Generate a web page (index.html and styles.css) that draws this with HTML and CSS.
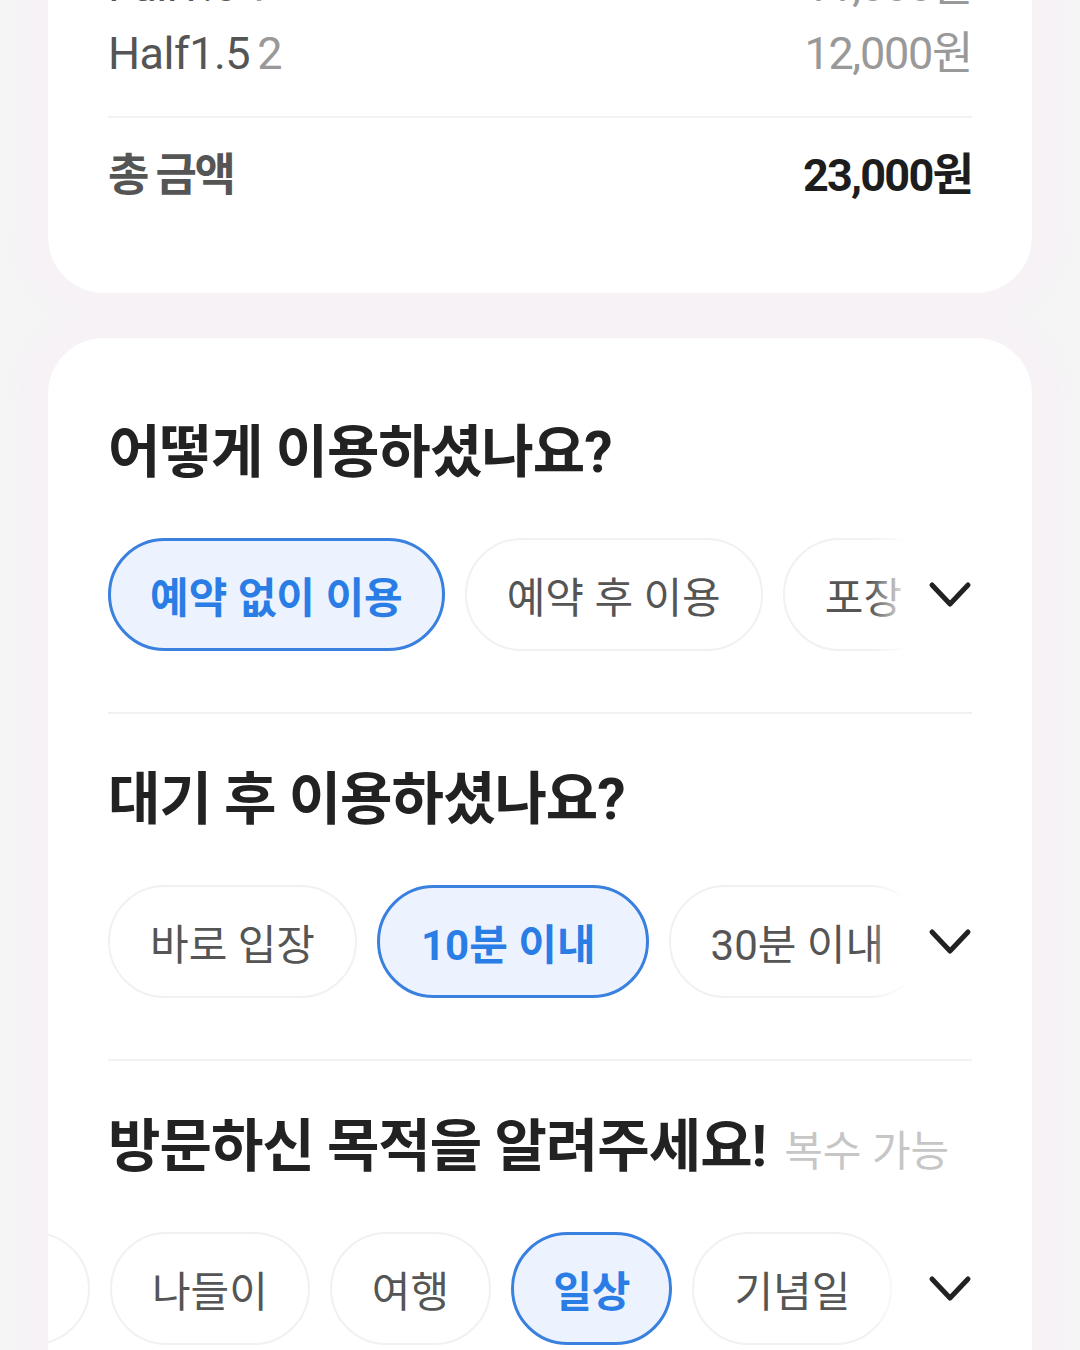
FILE: index.html
```html
<!DOCTYPE html>
<html lang="ko">
<head>
<meta charset="UTF-8">
<meta name="viewport" content="width=device-width, initial-scale=1.0">
<title>리뷰 작성</title>
<link rel="stylesheet" href="styles.css">
</head>
<body>
<div class="page">
    <div class="card receipt">
        <div class="item-row">
            <span class="item-name">Full1.0<span class="qty">1</span></span>
            <span class="item-price">11,000원</span>
        </div>
        <div class="item-row">
            <span class="item-name">Half1.5<span class="qty">2</span></span>
            <span class="item-price">12,000원</span>
        </div>
        <div class="total-row">
            <span class="total-label">총 금액</span>
            <span class="total-price">23,000원</span>
        </div>
    </div>

    <div class="card survey">
        <div class="section">
            <h2 class="question">어떻게 이용하셨나요?</h2>
            <div class="chips">
                <div class="chip-track">
                    <button class="chip selected">예약 없이 이용</button>
                    <button class="chip">예약 후 이용</button>
                    <button class="chip">포장</button>
                    <button class="chip">배달</button>
                </div>
                <div class="more">
                    <svg width="44" height="28" viewBox="0 0 44 28"><polyline points="4,4 22,23 40,4" fill="none" stroke="#222" stroke-width="5" stroke-linecap="round" stroke-linejoin="round"/></svg>
                </div>
            </div>
        </div>

        <div class="section">
            <h2 class="question">대기 후 이용하셨나요?</h2>
            <div class="chips">
                <div class="chip-track">
                    <button class="chip">바로 입장</button>
                    <button class="chip selected wide">10분 이내</button>
                    <button class="chip">30분 이내</button>
                    <button class="chip">1시간 이내</button>
                </div>
                <div class="more">
                    <svg width="44" height="28" viewBox="0 0 44 28"><polyline points="4,4 22,23 40,4" fill="none" stroke="#222" stroke-width="5" stroke-linecap="round" stroke-linejoin="round"/></svg>
                </div>
            </div>
        </div>

        <div class="section">
            <h2 class="question">방문하신 목적을 알려주세요! <span class="hint">복수 가능</span></h2>
            <div class="chips">
                <div class="chip-track scrolled">
                    <button class="chip">데이트</button>
                    <button class="chip">나들이</button>
                    <button class="chip">여행</button>
                    <button class="chip selected">일상</button>
                    <button class="chip">기념일</button>
                </div>
                <div class="more">
                    <svg width="44" height="28" viewBox="0 0 44 28"><polyline points="4,4 22,23 40,4" fill="none" stroke="#222" stroke-width="5" stroke-linecap="round" stroke-linejoin="round"/></svg>
                </div>
            </div>
        </div>
    </div>
</div>
</body>
</html>
```

FILE: styles.css
```css
body {
    margin: 0;
    padding: 0;
    background-color: #f5f5f5;
    font-family: Roboto, "Noto Sans CJK KR", sans-serif;
    color: #222;
}
.page {
    padding: 0 48px;
    height: 1350px;
    overflow: hidden;
}
.card {
    background-color: #fff;
    border-radius: 56px;
    padding: 0 60px;
    box-shadow: 0 0 16px 32px #f6f2f6;
    overflow: hidden;
}
.receipt {
    margin-top: -88px;
    padding-top: 40px;
    padding-bottom: 84px;
}
.item-row {
    display: flex;
    justify-content: space-between;
    height: 68px;
    line-height: 68px;
    font-size: 45px;
    letter-spacing: -0.5px;
}
.item-name {
    color: #555;
}
.qty {
    color: #999;
    margin-left: 7px;
}
.item-price {
    color: #999;
    letter-spacing: -1.3px;
}
.total-row {
    display: flex;
    justify-content: space-between;
    margin-top: 28px;
    padding-top: 25px;
    border-top: 2px solid #f2f2f2;
    height: 66px;
    line-height: 66px;
    font-size: 45px;
    font-weight: 700;
}
.total-label {
    color: #555;
    letter-spacing: -2.5px;
}
.total-price {
    color: #1d1d1d;
    letter-spacing: -1.8px;
}
.survey {
    margin-top: 45px;
    padding-top: 79px;
    height: 1100px;
}
.section {
    padding-bottom: 61px;
    border-bottom: 2px solid #f2f2f2;
}
.section + .section {
    padding-top: 50px;
}
.question {
    margin: 0;
    height: 72px;
    line-height: 72px;
    font-size: 57px;
    font-weight: 700;
    letter-spacing: -1px;
    color: #222;
    white-space: nowrap;
}
.hint {
    font-size: 42px;
    font-weight: 400;
    letter-spacing: 0;
    color: #c6c6c6;
    margin-left: 5px;
}
.chips {
    position: relative;
    margin: 49px -60px 0;
    padding-left: 60px;
    overflow: hidden;
}
.chip-track {
    display: flex;
    gap: 20px;
}
.chip-track.scrolled {
    margin-left: -218px;
}
.chip {
    flex: none;
    height: 113px;
    padding: 0 40px;
    border: 2px solid #f1f1f1;
    border-radius: 57px;
    background-color: #fff;
    font-family: Roboto, "Noto Sans CJK KR", sans-serif;
    font-size: 42px;
    letter-spacing: 0;
    color: #555;
    cursor: pointer;
}
.chip.selected {
    border: 3px solid #3a80de;
    padding: 0 39px;
    background-color: #edf3fe;
    color: #2b7de6;
    font-weight: 700;
}
.chip.selected.wide {
    padding: 0 50px 0 41px;
}
.more {
    position: absolute;
    top: 0;
    right: 0;
    bottom: 0;
    width: 162px;
    padding-right: 60px;
    box-sizing: border-box;
    display: flex;
    align-items: center;
    justify-content: flex-end;
    background: linear-gradient(to right, rgba(255, 255, 255, 0) 0, #fff 40px);
}
```
